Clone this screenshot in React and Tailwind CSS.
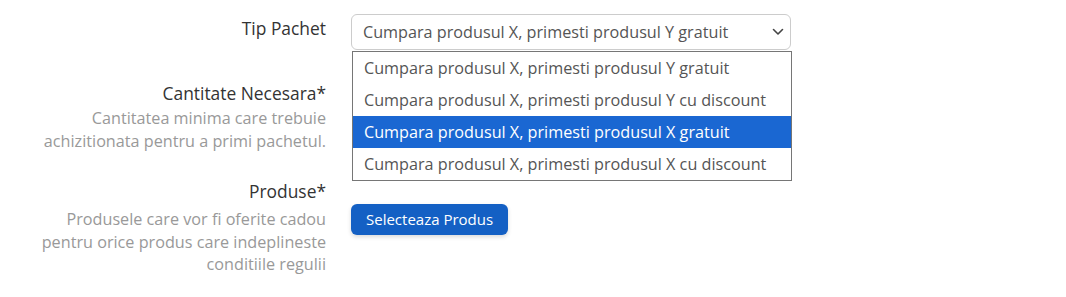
import React from "react";

const options = [
  "Cumpara produsul X, primesti produsul Y gratuit",
  "Cumpara produsul X, primesti produsul Y cu discount",
  "Cumpara produsul X, primesti produsul X gratuit",
  "Cumpara produsul X, primesti produsul X cu discount",
];

export default function App() {
  return (
    <div
      className="w-[1066px] h-[297px] bg-white overflow-hidden pt-[14px]"
      style={{ fontFamily: '"Open Sans", "Noto Sans", sans-serif' }}
    >
      <div className="flex flex-col">
        {/* Row 1 */}
        <div className="flex gap-[25px]">
          <div className="w-[326px] text-right text-[17.4px] leading-[28px] text-[#333]">
            Tip Pachet
          </div>
          <div className="relative w-[440px]">
            <div className="h-[36px] border border-[#ccc] rounded-[6px] flex items-center justify-between pl-[11px] pr-[6px] text-[16.2px] text-[#555]">
              <span className="pt-[1px]">{options[0]}</span>
              <svg width="12" height="8" viewBox="0 0 12 8" fill="none">
                <path d="M1.5 1.5L6 6L10.5 1.5" stroke="#444" strokeWidth="1.6" strokeLinecap="round" strokeLinejoin="round" />
              </svg>
            </div>
            <div className="absolute left-[1px] top-[37px] w-[440px] border border-[#767676] bg-white z-10">
              {options.map((o, i) => (
                <div
                  key={i}
                  className={
                    i === 2
                      ? "h-[32px] flex items-center pl-[11px] text-[16.2px] bg-[#1a67d2] text-white"
                      : "h-[32px] flex items-center pl-[11px] text-[16.2px] text-[#555]"
                  }
                >
                  {o}
                </div>
              ))}
            </div>
          </div>
        </div>

        {/* Row 2 */}
        <div className="flex gap-[25px] mt-[29px]">
          <div className="w-[326px] text-right">
            <div className="text-[17.4px] leading-[28px] text-[#333]">Cantitate Necesara*</div>
            <div className="text-[16.2px] leading-[23px] text-[#999]">
              Cantitatea minima care trebuie
              <br />
              achizitionata pentru a primi pachetul.
            </div>
          </div>
          <div className="w-[440px]" />
        </div>

        {/* Row 3 */}
        <div className="flex gap-[25px] mt-[24px]">
          <div className="w-[326px] text-right">
            <div className="text-[17.4px] leading-[28px] text-[#333]">Produse*</div>
            <div className="text-[16.2px] leading-[22.5px] text-[#999] mt-[3px]">
              Produsele care vor fi oferite cadou
              <br />
              pentru orice produs care indeplineste
              <br />
              conditiile regulii
            </div>
          </div>
          <div className="w-[440px] pt-[27px]">
            <button className="h-[31px] px-[15px] rounded-[6px] bg-[#1460c4] text-white text-[15px] font-medium shadow-[0_2px_4px_rgba(0,0,0,0.15)]">
              Selecteaza Produs
            </button>
          </div>
        </div>
      </div>
    </div>
  );
}
